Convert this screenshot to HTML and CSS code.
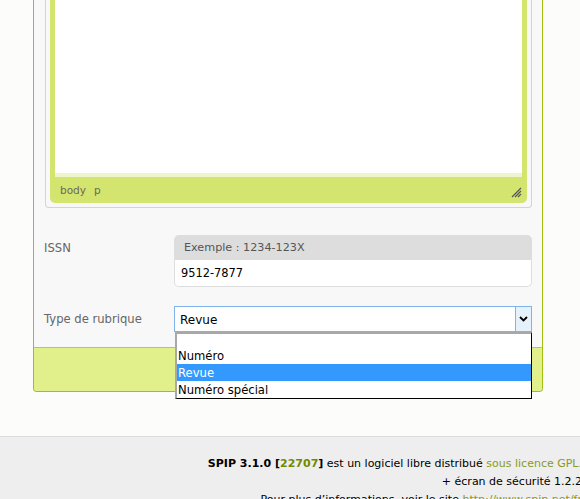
FILE: index.html
```html
<!DOCTYPE html>
<html lang="fr">
<head>
<meta charset="utf-8">
<title>Rubrique</title>
<link rel="stylesheet" href="styles.css">
</head>
<body>
<div class="page">
  <div class="box">
    <div class="editor">
      <div class="editor-green">
        <div class="editor-area"></div>
        <div class="editor-path">
          <span>body</span><span>p</span>
          <svg class="resize" width="11" height="11" viewBox="0 0 11 11">
            <path d="M10 1 L1 10 M10 4 L4 10 M10 7 L7 10" stroke="#555" stroke-width="1.2" fill="none"/>
          </svg>
        </div>
      </div>
    </div>

    <div class="fields">
      <div class="row row-issn">
        <label class="lbl">ISSN</label>
        <div class="ctrl">
          <div class="explication">Exemple : 1234-123X</div>
          <div class="input">9512-7877</div>
        </div>
      </div>
      <div class="row row-type">
        <label class="lbl">Type de rubrique</label>
        <div class="ctrl select-wrap">
          <div class="select">
            <span>Revue</span>
            <span class="arrow">
              <svg width="9" height="6" viewBox="0 0 9 6"><path d="M1 1 L4.5 4.5 L8 1" stroke="#000" stroke-width="1.8" fill="none"/></svg>
            </span>
          </div>
          <ul class="options">
            <li class="opt empty">&nbsp;</li>
            <li class="opt">Numéro</li>
            <li class="opt selected">Revue</li>
            <li class="opt">Numéro spécial</li>
          </ul>
        </div>
      </div>
    </div>
    <div class="boutons"></div>
  </div>
</div>
<div class="footer">
  <div class="footer-inner">
    <p><b>SPIP 3.1.0 [<a class="rev">22707</a>]</b> est un logiciel libre distribué <a class="lnk">sous licence GPL.</a></p>
    <p>+ écran de sécurité 1.2.2</p>
    <p>Pour plus d’informations, voir le site <a class="lnk">http://www.spip.net/fr</a></p>
  </div>
</div>
</body>
</html>
```

FILE: styles.css
```css
html, body {
  margin: 0;
  padding: 0;
}
body {
  background: #fcfcfa;
  font-family: "DejaVu Sans", Verdana, sans-serif;
  width: 580px;
  height: 499px;
  overflow: hidden;
}
.page {
  padding-left: 33px;
  height: 436px;
}
.box {
  width: 508px;
  background: #f8f8f8;
  border: 1px solid #a2c10f;
  border-top: none;
  border-radius: 0 0 4px 4px;
}
.editor {
  margin-left: 11px;
  width: 485px;
  border: 1px solid #d4d4d4;
  border-top: none;
  border-radius: 0 0 4px 4px;
}
.editor-green {
  margin: 0 4px 4px 4px;
  background: #d4e56f;
  border-radius: 0 0 5px 5px;
  padding: 0 5px;
}
.editor-area {
  height: 173px;
  background: #fff;
  border-bottom: 4px solid #eef5cc;
}
.editor-path {
  height: 26px;
  display: flex;
  align-items: center;
  gap: 8px;
  padding-left: 5px;
  font-size: 10.5px;
  color: #6a6a5a;
  position: relative;
}
.resize {
  position: absolute;
  right: 0;
  bottom: 5px;
}
.fields {
  padding: 27px 0 15px 10px;
}
.row {
  display: grid;
  grid-template-columns: 130px 358px;
}
.row-type {
  margin-top: 19px;
}
.lbl {
  font-size: 11.6px;
  color: #666;
  padding-top: 6px;
}
.ctrl {
  font-size: 12px;
}
.explication {
  height: 25px;
  line-height: 25px;
  background: #dddddd;
  border-radius: 5px 5px 0 0;
  padding-left: 10px;
  color: #555;
  font-size: 11.2px;
}
.input {
  height: 25px;
  line-height: 25px;
  padding-top: 1px;
  background: #fff;
  border: 1px solid #dddddd;
  border-top: none;
  border-radius: 0 0 5px 5px;
  padding-left: 6px;
  color: #000;
  font-size: 11.4px;
}
.select-wrap {
  position: relative;
}
.select {
  height: 23px;
  border: 1px solid #7eb4ea;
  background: #fff;
  display: flex;
  align-items: center;
  padding-left: 5px;
  padding-top: 1px;
  box-sizing: content-box;
  color: #000;
  font-size: 12px;
}
.select span:first-child {
  flex: 1;
}
.arrow {
  width: 15px;
  height: 24px;
  margin-top: -1px;
  border-left: 1px solid #7eb4ea;
  background: #e5f1fb;
  display: flex;
  align-items: center;
  justify-content: center;
}
.options {
  position: absolute;
  left: 1px;
  top: 26px;
  width: 354px;
  margin: 0;
  padding: 0;
  list-style: none;
  background: #fff;
  border: 1px solid #000;
  border-top: 2px solid #a8a8a8;
  border-left: 2px solid #a8a8a8;
  z-index: 2;
}
.opt {
  height: 17px;
  line-height: 18px;
  padding-left: 1px;
  font-size: 11.6px;
  color: #000;
}
.opt.empty {
  height: 13px;
}
.opt.selected {
  background: #3399ff;
  color: #fff;
}
.boutons {
  height: 43px;
  background: #e2f08c;
  border-top: 1px solid #b5d22a;
  border-radius: 0 0 4px 4px;
}
.footer {
  border-top: 1px solid #dcdcdc;
  background: #eeeeee;
  height: 62px;
}
.footer-inner {
  width: 582px;
  text-align: right;
  padding-top: 18px;
  font-size: 11px;
  white-space: nowrap;
  color: #000;
}
.footer-inner p {
  margin: 0;
  line-height: 18px;
}
.rev {
  color: #738a00;
}
.lnk {
  color: #8a9a20;
}
```
